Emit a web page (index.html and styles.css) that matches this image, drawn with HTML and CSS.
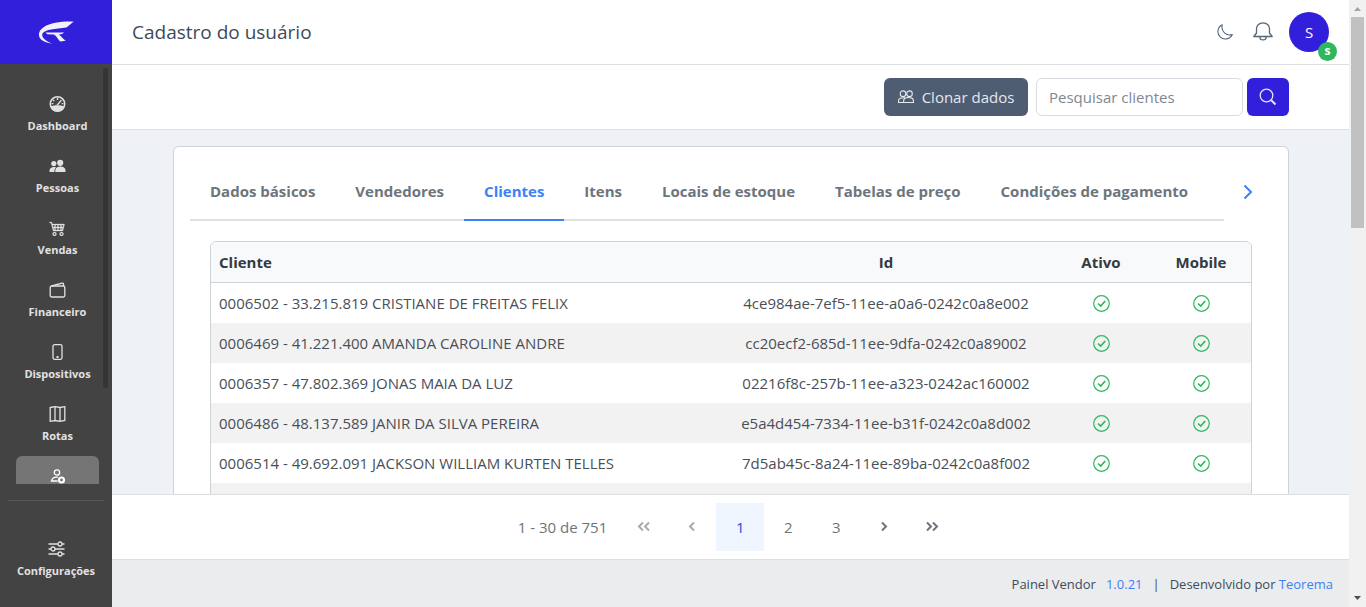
FILE: index.html
```html
<!DOCTYPE html>
<html lang="pt-BR">
<head>
    <meta charset="UTF-8">
    <meta name="viewport" content="width=device-width, initial-scale=1.0">
    <title>Painel Vendor</title>
    <link rel="stylesheet" href="styles.css">
</head>
<body>
    <!-- Sidebar -->
    <aside class="sidebar">
        <a class="brand" href="#" aria-label="Teorema">
            <svg width="37" height="25" viewBox="114 60 112 74" fill="#f2f2fa">
                <path d="M222 64C184 63 152 68 132 80C112 92 112 113 130 123C138 128 148 130 158 131C138 123 122 111 128 99C136 88 166 86 200 82C208 77 215 70 222 64Z"/>
                <path d="M137 97L193 97C190 101 184 103 177 103C183 107 190 117 198 122L182 124C174 120 172 108 162 103L142 102Z"/>
            </svg>
        </a>
        <div class="menu-area">
            <nav class="menu">
                <a class="menu-item" href="#">
                    <svg class="icon" viewBox="0 0 16 16"><circle cx="8" cy="8" r="7.2" fill="none" stroke="currentColor" stroke-width="1.6"/><path d="M1.2 10.4C5 8.8 11 8.8 14.8 10.4C13.8 13.5 11 15.4 8 15.4S2.2 13.5 1.2 10.4Z"/><path d="M8 2v2M3.6 3.9l1.2 1.2M2.2 7.6h1.7M12.2 7.6h1.7M7.4 9.4l4.5-5.2" fill="none" stroke="currentColor" stroke-width="1.4"/></svg>
                    <span>Dashboard</span>
                </a>
                <a class="menu-item" href="#">
                    <svg class="icon" viewBox="0 0 16 16"><circle cx="10.700" cy="4.800" r="3.100"/><circle cx="4.300" cy="5.600" r="2.600"/><path d="M5.800 14V12.500C5.800 10 8 8.600 10.800 8.600S16 10 16 12.500V14ZM0 14V12.500C0 10.300 2 9 4.500 9C5.300 9 6 9.100 6.500 9.400C5.300 10.300 4.900 11.500 4.900 14Z"/></svg>
                    <span>Pessoas</span>
                </a>
                <a class="menu-item" href="#">
                    <svg class="icon" viewBox="0 0 16 16"><path d="M0 2.500A.5.5 0 0 1 .5 2H2a.5.5 0 0 1 .485.379L2.890 4H14.500a.5.5 0 0 1 .485.621l-1.500 6A.5.5 0 0 1 13 11H4a.5.5 0 0 1-.485-.379L1.610 3H.5a.5.5 0 0 1-.5-.5M3.140 5l.5 2H5V5zM6 5v2h2V5zm3 0v2h2V5zm3 0v2h1.360l.5-2zm1.110 3H12v2h.610zM11 8H9v2h2zM8 8H6v2h2zM5 8H3.890l.5 2H5zm0 5a1 1 0 1 0 0 2 1 1 0 0 0 0-2m-2 1a2 2 0 1 1 4 0 2 2 0 0 1-4 0m9-1a1 1 0 1 0 0 2 1 1 0 0 0 0-2m-2 1a2 2 0 1 1 4 0 2 2 0 0 1-4 0" stroke="currentColor" stroke-width="0.300"/></svg>
                    <span>Vendas</span>
                </a>
                <a class="menu-item" href="#">
                    <svg class="icon line" viewBox="0 0 16 16"><rect x="0.700" y="4" width="14.600" height="11" rx="1.500"/><path d="M2 4L12.500 1.200C13.500 1 14 1.500 14 2.300V4"/></svg>
                    <span>Financeiro</span>
                </a>
                <a class="menu-item" href="#">
                    <svg class="icon line" viewBox="0 0 16 16"><rect x="3.500" y="0.700" width="9" height="14.600" rx="1.500"/><path d="M7 13h2" stroke-width="2"/></svg>
                    <span>Dispositivos</span>
                </a>
                <a class="menu-item" href="#">
                    <svg class="icon line" viewBox="0 0 16 16"><path d="M0.700 1.500L5.500 0.700L10.500 1.500L15.300 0.700V14.500L10.500 15.300L5.500 14.500L0.700 15.300ZM5.500 0.700V14.500M10.500 1.500V15.300"/></svg>
                    <span>Rotas</span>
                </a>
                <a class="menu-item active" href="#" aria-label="Usuários">
                    <svg class="icon line" viewBox="0 0 16 16"><circle cx="7.500" cy="4.500" r="2.700"/><path d="M8.500 9.200H7C4 9.200 2.500 11 2 13H8"/><circle cx="12" cy="12" r="2.500" stroke-width="2.200"/></svg>
                </a>
            </nav>
            <div class="menu-scroll"></div>
        </div>
        <div class="menu-bottom">
            <a class="menu-item" href="#">
                <svg class="icon line" viewBox="0 0 16 16"><path d="M0 3H9.500M13.500 3H16M0 8H2.500M6.500 8H16M0 13H9.500M13.500 13H16"/><circle cx="11.500" cy="3" r="2"/><circle cx="4.500" cy="8" r="2"/><circle cx="11.500" cy="13" r="2"/></svg>
                <span>Configurações</span>
            </a>
        </div>
    </aside>

    <div class="main">
        <!-- Header -->
        <header class="header">
            <h1>Cadastro do usuário</h1>
            <button class="icon-button" type="button" aria-label="Tema escuro">
                <svg width="16" height="16" viewBox="0 0 16 16" fill="none" stroke="currentColor" stroke-width="1.1" stroke-linejoin="round"><path d="M5.300 0.700A7.500 7.500 0 1 0 15.300 10.500C9.500 12.500 3.500 7.500 5.300 0.700Z"/></svg>
            </button>
            <button class="icon-button bell" type="button" aria-label="Notificações">
                <svg width="20" height="20" viewBox="0 0 20 20" fill="none" stroke="currentColor" stroke-width="1.300" stroke-linejoin="round"><path d="M0.800 14.500L3.500 11V6.800A6.500 6 0 0 1 16.500 6.800V11L19.200 14.500ZM6.800 14.700A3.200 3.200 0 0 0 13.200 14.700"/></svg>
            </button>
            <button class="avatar" type="button">S<span class="avatar-badge">s</span></button>
        </header>

        <!-- Search -->
        <form class="toolbar">
            <button class="clone-button" type="button">
                <svg width="16" height="16" viewBox="0 0 16 16" fill="none" stroke="currentColor" stroke-width="1.100"><circle cx="5" cy="4.700" r="2.800"/><circle cx="11.500" cy="4.700" r="2.800"/><path d="M5.600 13.500V12C5.600 9.500 8 8.500 10.500 8.500S15.500 9.500 15.500 12V13.500ZM5.500 13.500H0.500V12C0.500 9.500 3 8.500 7 8.800"/></svg>
                Clonar dados
            </button>
            <input class="search-input" type="text" placeholder="Pesquisar clientes" aria-label="Pesquisar clientes">
            <button class="search-button" type="submit" aria-label="Pesquisar">
                <svg width="18" height="18" viewBox="0 0 18 18" fill="none" stroke="currentColor"><circle cx="7.500" cy="7.500" r="6.300" stroke-width="1.300"/><path d="M12 12L16.500 16.500" stroke-width="2"/></svg>
            </button>
        </form>

        <!-- Content -->
        <main class="content">
            <div class="card">
                <div class="tabs">
                    <div class="tab-list">
                        <a class="tab" href="#">Dados básicos</a>
                        <a class="tab" href="#">Vendedores</a>
                        <a class="tab active" href="#">Clientes</a>
                        <a class="tab" href="#">Itens</a>
                        <a class="tab" href="#">Locais de estoque</a>
                        <a class="tab" href="#">Tabelas de preço</a>
                        <a class="tab" href="#">Condições de pagamento</a>
                    </div>
                    <button class="tab-next" type="button" aria-label="Próximo">
                        <svg width="16" height="16" viewBox="0 0 16 16" fill="none" stroke="currentColor" stroke-width="2"><path d="M4.500 1.500L11 8L4.500 14.500"/></svg>
                    </button>
                </div>
                <div class="table-box">
                    <table>
                        <thead>
                            <tr>
                                <th class="col-client">Cliente</th>
                                <th class="col-id">Id</th>
                                <th class="col-flag">Ativo</th>
                                <th class="col-flag">Mobile</th>
                            </tr>
                        </thead>
                        <tbody>
                            <tr>
                                <td class="col-client">0006502 - 33.215.819 CRISTIANE DE FREITAS FELIX</td>
                                <td>4ce984ae-7ef5-11ee-a0a6-0242c0a8e002</td>
                                <td><svg class="check"><use href="#check"/></svg></td>
                                <td><svg class="check"><use href="#check"/></svg></td>
                            </tr>
                            <tr>
                                <td class="col-client">0006469 - 41.221.400 AMANDA CAROLINE ANDRE</td>
                                <td>cc20ecf2-685d-11ee-9dfa-0242c0a89002</td>
                                <td><svg class="check"><use href="#check"/></svg></td>
                                <td><svg class="check"><use href="#check"/></svg></td>
                            </tr>
                            <tr>
                                <td class="col-client">0006357 - 47.802.369 JONAS MAIA DA LUZ</td>
                                <td>02216f8c-257b-11ee-a323-0242ac160002</td>
                                <td><svg class="check"><use href="#check"/></svg></td>
                                <td><svg class="check"><use href="#check"/></svg></td>
                            </tr>
                            <tr>
                                <td class="col-client">0006486 - 48.137.589 JANIR DA SILVA PEREIRA</td>
                                <td>e5a4d454-7334-11ee-b31f-0242c0a8d002</td>
                                <td><svg class="check"><use href="#check"/></svg></td>
                                <td><svg class="check"><use href="#check"/></svg></td>
                            </tr>
                            <tr>
                                <td class="col-client">0006514 - 49.692.091 JACKSON WILLIAM KURTEN TELLES</td>
                                <td>7d5ab45c-8a24-11ee-89ba-0242c0a8f002</td>
                                <td><svg class="check"><use href="#check"/></svg></td>
                                <td><svg class="check"><use href="#check"/></svg></td>
                            </tr>
                            <tr><td colspan="4"></td></tr>
                        </tbody>
                    </table>
                </div>
            </div>
        </main>

        <!-- Pagination -->
        <nav class="paginator">
            <span class="page-info">1 - 30 de 751</span>
            <button type="button" disabled aria-label="Primeira"><svg width="14" height="14" viewBox="0 0 14 14"><path d="M6 2.500L2 6.500L6 10.500M12 2.500L8 6.500L12 10.500"/></svg></button>
            <button type="button" disabled aria-label="Anterior"><svg width="14" height="14" viewBox="0 0 14 14"><path d="M9 2.500L5 6.500L9 10.500"/></svg></button>
            <button type="button" class="current">1</button>
            <button type="button">2</button>
            <button type="button">3</button>
            <button type="button" aria-label="Próxima"><svg width="14" height="14" viewBox="0 0 14 14"><path d="M5 2.500L9 6.500L5 10.500"/></svg></button>
            <button type="button" aria-label="Última"><svg width="14" height="14" viewBox="0 0 14 14"><path d="M2 2.500L6 6.500L2 10.500M8 2.500L12 6.500L8 10.500"/></svg></button>
        </nav>

        <footer class="footer">
            <span>Painel Vendor</span>
            <a class="version" href="#">1.0.21</a>
            <span class="bar">|</span>
            <span>Desenvolvido por <a href="#">Teorema</a></span>
        </footer>
    </div>

    <!-- Page scrollbar -->
    <div class="scrollbar">
        <svg width="17" height="17" viewBox="0 0 17 17" fill="#a3a3a3"><path d="M5 11L8.500 7L12 11Z"/></svg>
        <div class="thumb"></div>
        <svg width="17" height="17" viewBox="0 0 17 17" fill="#505050"><path d="M5 6L8.500 10L12 6Z"/></svg>
    </div>

    <svg width="0" height="0" class="symbols">
        <symbol id="check" viewBox="0 0 17 17">
            <circle cx="8.500" cy="8.500" r="7.800" fill="none" stroke="currentColor" stroke-width="1.200"/>
            <path d="M5 8.500L7.700 11L12.200 6" fill="none" stroke="currentColor" stroke-width="1.700"/>
        </symbol>
    </svg>
</body>
</html>
```
FILE: styles.css
```css
* {
    box-sizing: border-box;
}
body {
    margin: 0;
    height: 100vh;
    display: grid;
    grid-template-columns: 112px 1fr 17px;
    overflow: hidden;
    font-family: "Open Sans", "Noto Sans", sans-serif;
    font-size: 15px;
    line-height: 24px;
    color: #3f4a5a;
    background-color: #eef1f6;
}
a {
    text-decoration: none;
    color: #4080f5;
}
button {
    border: none;
    padding: 0;
    font: inherit;
    color: inherit;
    background: none;
    cursor: pointer;
    display: flex;
    align-items: center;
    justify-content: center;
}

/* Sidebar */
.sidebar {
    display: flex;
    flex-direction: column;
    min-height: 0;
    background-color: #434343;
}
.brand {
    height: 64px;
    flex: none;
    display: flex;
    align-items: center;
    justify-content: center;
    background-color: #321fdb;
}
.menu-area {
    flex: 1;
    min-height: 0;
    display: flex;
    overflow: hidden;
}
.menu {
    flex: 1;
    padding: 20px 4px 0 16px;
    display: flex;
    flex-direction: column;
    gap: 4px;
}
.menu-item {
    flex: none;
    height: 58px;
    padding-top: 12px;
    display: flex;
    flex-direction: column;
    align-items: center;
    gap: 4px;
    border-radius: 6px;
    font-size: 11px;
    line-height: 20px;
    font-weight: 700;
    color: #e1e1e1;
}
.menu-item.active {
    background-color: #757575;
    color: #fff;
}
.menu-scroll {
    width: 5px;
    height: 320px;
    margin: 4px 4px 0 0;
    border-radius: 3px;
    background-color: #343434;
}
.icon {
    flex: none;
    width: 17px;
    height: 16px;
    fill: currentColor;
}
.icon.line {
    fill: none;
    stroke: currentColor;
    stroke-width: 1.3;
}
.menu-bottom {
    flex: none;
    height: 107px;
    margin: 16px 8px 0;
    padding-top: 28px;
    border-top: 1px solid #545454;
}

/* Header */
.main {
    min-width: 0;
    min-height: 0;
    display: flex;
    flex-direction: column;
}
.header {
    flex: none;
    height: 65px;
    padding: 0 20px;
    display: flex;
    align-items: center;
    gap: 20px;
    background-color: #fff;
    border-bottom: 1px solid #dcdee1;
}
.header h1 {
    margin: 0 auto 0 0;
    font-size: 19px;
    font-weight: 500;
    color: #3c4b5a;
}
.icon-button {
    color: #56657a;
}
.bell {
    margin-right: -4px;
}
.avatar {
    position: relative;
    width: 40px;
    height: 40px;
    border-radius: 50%;
    background-color: #321fdb;
    color: #fff;
}
.avatar-badge {
    position: absolute;
    right: -8px;
    bottom: -9px;
    width: 19px;
    height: 19px;
    border-radius: 50%;
    background-color: #2eb85c;
    font-size: 12px;
    line-height: 18px;
    font-weight: 700;
}

/* Search toolbar */
.toolbar {
    flex: none;
    height: 65px;
    padding: 0 60px;
    display: flex;
    align-items: center;
    justify-content: flex-end;
    background-color: #fff;
    border-bottom: 1px solid #dcdee1;
}
.clone-button {
    width: 144px;
    height: 38px;
    margin-right: 8px;
    gap: 8px;
    border-radius: 6px;
    background-color: #4f5d73;
    color: #e6e8eb;
}
.search-input {
    width: 207px;
    height: 38px;
    margin-right: 4px;
    padding: 0 12px;
    border: 1px solid #d8dbe0;
    border-radius: 6px;
    font: inherit;
    background-color: #fff;
}
.search-input::placeholder {
    color: #7f8791;
}
.search-button {
    width: 42px;
    height: 38px;
    border-radius: 6px;
    background-color: #321fdb;
    color: #e6e4fb;
}

/* Card and tabs */
.content {
    flex: 1;
    min-height: 0;
    padding: 16px 60px 0 61px;
    overflow: hidden;
}
.card {
    padding: 16px;
    border: 1px solid #cfd2d6;
    border-radius: 6px;
    background-color: #fff;
}
.tabs {
    display: flex;
}
.tab-list {
    flex: 1;
    min-width: 0;
    display: flex;
    border-bottom: 2px solid #dee2e6;
}
.tab {
    height: 58px;
    margin-bottom: -2px;
    padding: 16px 20px 0;
    border-bottom: 2px solid transparent;
    font-weight: 700;
    white-space: nowrap;
    color: #6c757d;
}
.tab.active {
    color: #3b82f6;
    border-bottom-color: #3b82f6;
}
.tab-next {
    width: 48px;
    color: #3b82f6;
}

/* Table */
.table-box {
    margin: 20px 20px 0;
    border: 1px solid #cfd2d6;
    border-radius: 6px;
    overflow: hidden;
}
table {
    width: 100%;
    table-layout: fixed;
    border-collapse: separate;
    border-spacing: 0;
}
th,
td {
    height: 40px;
    padding: 0 8px;
    text-align: center;
    white-space: nowrap;
}
th {
    height: 41px;
    font-weight: 700;
    color: #343a40;
    background-color: #f8f9fb;
    border-bottom: 1px solid #cfd2d6;
}
th.col-client,
td.col-client {
    text-align: left;
}
.col-id {
    width: 330px;
}
.col-flag {
    width: 100px;
}
td {
    color: #4a4f57;
}
tbody tr:nth-child(even) {
    background-color: #f2f2f2;
}
.check {
    display: block;
    width: 17px;
    height: 17px;
    margin: 0 auto;
    color: #2eb85c;
}

/* Pagination */
.paginator {
    flex: none;
    height: 65px;
    display: flex;
    align-items: center;
    justify-content: center;
    background-color: #fff;
    border-top: 1px solid #dcdee1;
    color: #6c757d;
}
.page-info {
    padding: 0 13px;
}
.paginator button {
    width: 48px;
    height: 48px;
}
.paginator button:disabled {
    opacity: 0.6;
}
.paginator svg {
    fill: none;
    stroke: currentColor;
    stroke-width: 2;
}
.paginator .current {
    background-color: #eff6ff;
    color: #1d4ed8;
}

/* Footer */
.footer {
    flex: none;
    height: 48px;
    padding: 0 16px;
    display: flex;
    align-items: center;
    justify-content: flex-end;
    gap: 10px;
    border-top: 1px solid #dcdee1;
    background-color: #ebecee;
    font-size: 13px;
}

/* Page scrollbar */
.scrollbar {
    display: flex;
    flex-direction: column;
    align-items: center;
    background-color: #f1f1f1;
}
.thumb {
    width: 13px;
    height: 211px;
    margin-bottom: auto;
    background-color: #c1c1c1;
}
.symbols {
    position: absolute;
}
```
